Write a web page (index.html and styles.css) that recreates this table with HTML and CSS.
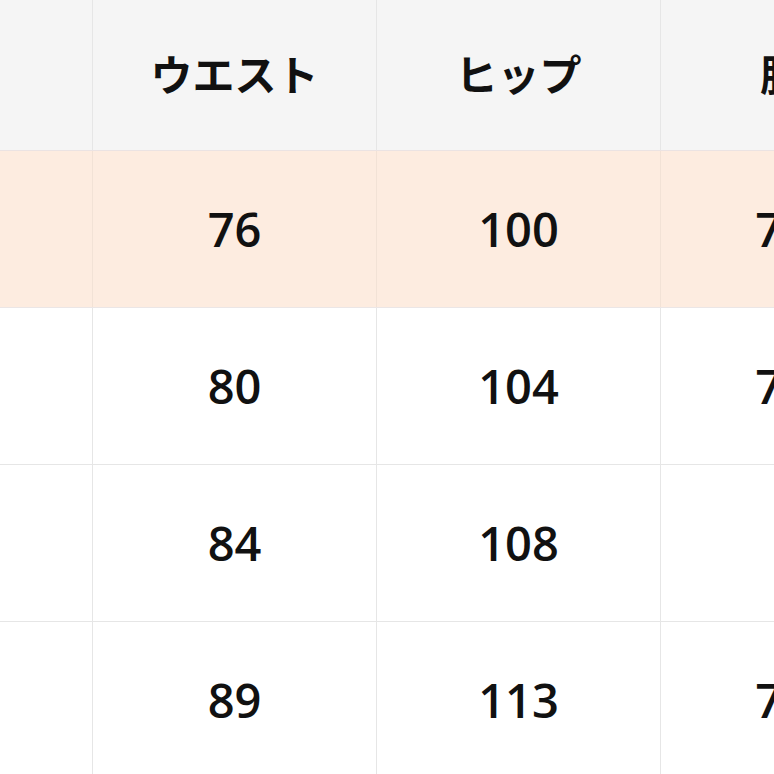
FILE: index.html
```html
<!DOCTYPE html>
<html lang="ja">
<head>
<meta charset="utf-8">
<link rel="stylesheet" href="styles.css">
</head>
<body>
<div class="viewport">
<table class="size-table">
  <colgroup>
    <col class="c-first">
    <col class="c-mid">
    <col class="c-mid">
    <col class="c-last">
  </colgroup>
  <thead>
    <tr>
      <th></th>
      <th>ウエスト</th>
      <th>ヒップ</th>
      <th>股下</th>
    </tr>
  </thead>
  <tbody>
    <tr class="hl">
      <td></td><td>76</td><td>100</td><td>72.5</td>
    </tr>
    <tr>
      <td></td><td>80</td><td>104</td><td>74.5</td>
    </tr>
    <tr>
      <td></td><td>84</td><td>108</td><td></td>
    </tr>
    <tr>
      <td></td><td>89</td><td>113</td><td>78.5</td>
    </tr>
  </tbody>
</table>
</div>
</body>
</html>
```
FILE: styles.css
```css
html, body {
  margin: 0;
  padding: 0;
  background: #ffffff;
}
.viewport {
  width: 774px;
  height: 774px;
  overflow: hidden;
}
.size-table {
  border-collapse: collapse;
  table-layout: fixed;
  width: 1134px;
  margin-left: -192px;
  margin-top: -1px;
  font-family: "Open Sans", "Noto Sans CJK JP", sans-serif;
  color: #111111;
}
.c-first { width: 284px; }
.c-mid { width: 284px; }
.c-last { width: 283px; }
.size-table th,
.size-table td {
  border: 1px solid #e6e6e6;
  text-align: center;
  vertical-align: middle;
  padding: 0;
}
.size-table th {
  height: 151px;
  background: #f5f5f5;
  font-family: "Noto Sans CJK JP", sans-serif;
  font-weight: 700;
  font-size: 42px;
  padding-bottom: 6px;
  box-sizing: border-box;
  border-bottom-color: #ebe3e3;
}
.size-table td {
  height: 156px;
  font-size: 47px;
  font-weight: 600;
}
.size-table tr.hl td {
  background: #fdece0;
  border-color: #f2e2d6;
  border-bottom-color: #ebe6e6;
}
```
